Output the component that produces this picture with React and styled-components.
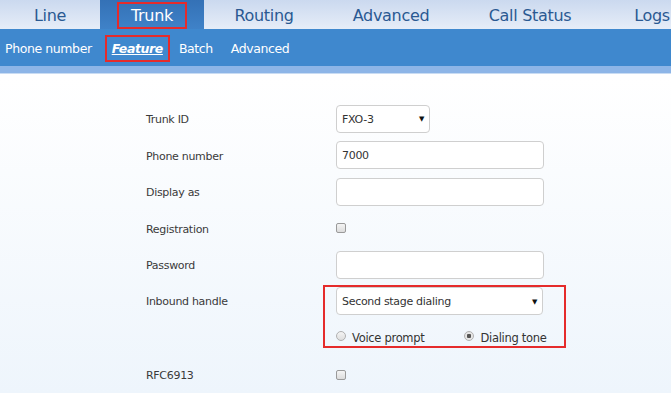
import React from "react";
import styled, { createGlobalStyle } from "styled-components";

const GlobalStyle = createGlobalStyle`
  html, body {
    margin: 0;
    padding: 0;
    width: 671px;
    height: 393px;
    overflow: hidden;
    font-family: "DejaVu Sans", Tahoma, sans-serif;
  }
`;

const Page = styled.div`
  width: 671px;
  height: 393px;
  overflow: hidden;
  display: flex;
  flex-direction: column;
  background: linear-gradient(to bottom, #ffffff 0%, #ffffff 20%, #eef5fc 100%);
`;

const TopNav = styled.div`
  height: 31px;
  display: flex;
  background: linear-gradient(to bottom, #cbd9ef 0%, #e6edf8 100%);
  white-space: nowrap;
`;

const Tab = styled.div`
  width: ${(p) => p.w}px;
  flex: none;
  display: flex;
  align-items: center;
  justify-content: center;
  padding-top: 2px;
  box-sizing: border-box;
  font-size: 16px;
  letter-spacing: -0.3px;
  color: ${(p) => (p.active ? "#ffffff" : "#2a5992")};
  background: ${(p) =>
    p.active ? "linear-gradient(to bottom, #3471b6 0%, #3f82c8 100%)" : "transparent"};
`;

const Marked = styled.span`
  border: 2px solid #e52b2b;
  padding: ${(p) => p.pad || "2px 10px"};
  line-height: normal;
`;

const SubNav = styled.div`
  height: 38px;
  display: flex;
  align-items: center;
  padding: 1px 0 0 5px;
  box-sizing: border-box;
  background: #3f88ce;
  font-size: 12.5px;
  letter-spacing: -0.4px;
  color: #ffffff;
  white-space: nowrap;
`;

const SubItem = styled.span`
  margin-right: ${(p) => p.mr}px;
  font-style: ${(p) => (p.active ? "italic" : "normal")};
  font-weight: ${(p) => (p.active ? "bold" : "normal")};
  text-decoration: ${(p) => (p.active ? "underline" : "none")};
`;

const Strip = styled.div`
  height: 8px;
  background: #8db5e7;
  border-bottom: 1px solid #c9dcf3;
`;

const Form = styled.div`
  padding: 26px 0 0 146px;
  display: flex;
  flex-direction: column;
`;

const Row = styled.div`
  height: ${(p) => p.h || 36.6}px;
  display: flex;
  align-items: ${(p) => (p.top ? "flex-start" : "center")};
`;

const Label = styled.div`
  width: 190px;
  flex: none;
  padding-top: ${(p) => (p.top ? 0 : 2)}px;
  font-size: 11px;
  letter-spacing: -0.3px;
  color: #3a3a3a;
  line-height: ${(p) => (p.top ? "38px" : "normal")};
`;

const Field = styled.div`
  width: ${(p) => p.w}px;
  height: 28px;
  flex: none;
  box-sizing: border-box;
  border: 1px solid #cfcfcf;
  border-radius: 4px;
  background: #ffffff;
  display: flex;
  align-items: center;
  justify-content: space-between;
  padding: 1px 5px 0 5px;
  font-size: 11px;
  letter-spacing: -0.3px;
  color: #333333;
`;

const Caret = styled.span`
  font-size: 7px;
  color: #111111;
`;

const Check = styled.span`
  width: 10px;
  height: 10px;
  box-sizing: border-box;
  border: 1px solid #9a9a9a;
  border-radius: 2px;
  background: linear-gradient(to bottom, #f4f4f4, #dcdcdc);
`;

const Group = styled.div`
  margin: 2px 0 0 -13px;
  width: 243px;
  height: 63px;
  box-sizing: border-box;
  border: 2px solid #e52b2b;
  padding: 0 0 0 11px;
  display: flex;
  flex-direction: column;
`;

const Radios = styled.div`
  display: flex;
  align-items: center;
  margin-top: 16px;
  font-size: 11.5px;
  letter-spacing: -0.3px;
  color: #333333;
`;

const RadioItem = styled.label`
  display: flex;
  align-items: center;
  gap: 6px;
  margin-right: ${(p) => p.mr}px;
`;

const Dot = styled.span`
  width: 10px;
  height: 10px;
  box-sizing: border-box;
  border-radius: 50%;
  border: 1px solid #b0b0b0;
  background: ${(p) =>
    p.on
      ? "radial-gradient(circle, #555 0 2px, #e6e6e6 2.5px)"
      : "linear-gradient(to bottom, #f4f4f4, #dedede)"};
  position: relative;
  top: -2px;
`;

const tabs = [
  { name: "Line", w: 100 },
  { name: "Trunk", w: 104, active: true },
  { name: "Routing", w: 120 },
  { name: "Advanced", w: 134 },
  { name: "Call Status", w: 144 },
  { name: "Logs", w: 100 },
];

export default function App() {
  return (
    <>
      <GlobalStyle />
      <Page>
        <TopNav>
          {tabs.map((t) => (
            <Tab key={t.name} w={t.w} active={t.active}>
              {t.active ? <Marked pad="2px 12px">{t.name}</Marked> : t.name}
            </Tab>
          ))}
        </TopNav>
        <SubNav>
          <SubItem mr={13}>Phone number</SubItem>
          <SubItem mr={9}>
            <Marked pad="4px 5px">
              <SubItem active mr={0}>Feature</SubItem>
            </Marked>
          </SubItem>
          <SubItem mr={18}>Batch</SubItem>
          <SubItem mr={0}>Advanced</SubItem>
        </SubNav>
        <Strip />
        <Form>
          <Row>
            <Label>Trunk ID</Label>
            <Field w={94}>
              FXO-3<Caret>▼</Caret>
            </Field>
          </Row>
          <Row>
            <Label>Phone number</Label>
            <Field w={208}>7000</Field>
          </Row>
          <Row>
            <Label>Display as</Label>
            <Field w={208} />
          </Row>
          <Row>
            <Label>Registration</Label>
            <Check />
          </Row>
          <Row>
            <Label>Password</Label>
            <Field w={208} />
          </Row>
          <Row h={73.2} top>
            <Label top>Inbound handle</Label>
            <Group>
              <Field w={207}>
                Second stage dialing<Caret>▼</Caret>
              </Field>
              <Radios>
                <RadioItem mr={40}>
                  <Dot />
                  Voice prompt
                </RadioItem>
                <RadioItem mr={0}>
                  <Dot on />
                  Dialing tone
                </RadioItem>
              </Radios>
            </Group>
          </Row>
          <Row>
            <Label>RFC6913</Label>
            <Check />
          </Row>
        </Form>
      </Page>
    </>
  );
}
